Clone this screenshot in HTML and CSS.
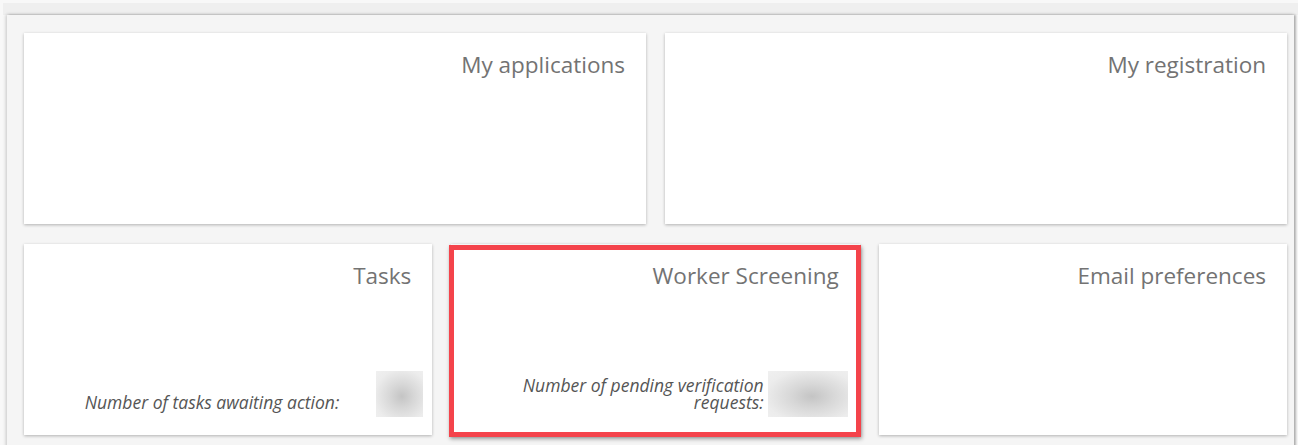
FILE: index.html
```html
<!DOCTYPE html>
<html lang="en">
<head>
<meta charset="utf-8">
<title>Dashboard</title>
<link rel="stylesheet" href="styles.css">
</head>
<body>
  <div class="topbar"></div>
  <main class="panel">
    <section class="row row-two">
      <article class="tile">
        <h2 class="tile-title">My applications</h2>
      </article>
      <article class="tile">
        <h2 class="tile-title">My registration</h2>
      </article>
    </section>
    <section class="row row-three">
      <article class="tile">
        <h2 class="tile-title">Tasks</h2>
        <div class="tile-footer">
          <span class="stat-label">Number of tasks awaiting action:</span>
          <span class="stat-value"><span class="redacted redacted-narrow"></span></span>
        </div>
      </article>
      <article class="tile tile-highlight">
        <h2 class="tile-title">Worker Screening</h2>
        <div class="tile-footer">
          <span class="stat-label">Number of pending verification<br>requests:</span>
          <span class="stat-value"><span class="redacted redacted-wide"></span></span>
        </div>
      </article>
      <article class="tile">
        <h2 class="tile-title">Email preferences</h2>
      </article>
    </section>
  </main>
</body>
</html>
```

FILE: styles.css
```css
* {
  box-sizing: border-box;
}

html, body {
  margin: 0;
  height: 100%;
}

body {
  background: #f8f8f8;
  font-family: "Open Sans", "Noto Sans", sans-serif;
  overflow: hidden;
}

.topbar {
  height: 12px;
  margin: 3px 0 0 3px;
  background: #efefef;
}

.panel {
  margin: 0 4px 0 7px;
  background: #f5f5f5;
  box-shadow: 0 -1px 3px rgba(0, 0, 0, 0.12), -2px 0 3px rgba(0, 0, 0, 0.1), 2px 0 2px rgba(0, 0, 0, 0.25);
  padding: 18px 7px 20px 17px;
  min-height: 440px;
}

.row {
  display: grid;
  gap: 19px;
}

.row + .row {
  margin-top: 20px;
}

.row-two {
  grid-template-columns: 1fr 1fr;
}

.row-three {
  grid-template-columns: 1fr 1fr 1fr;
}

.tile {
  position: relative;
  height: 191px;
  background: #fff;
  box-shadow: 0 1px 3px rgba(0, 0, 0, 0.28);
  display: flex;
  flex-direction: column;
  padding: 17px 21px 18px 20px;
}

.tile-title {
  margin: 0;
  font-size: 22.5px;
  font-weight: 400;
  line-height: 30px;
  color: #737373;
  text-align: right;
}

.tile-footer {
  margin-top: auto;
  margin-right: -12px;
  display: flex;
  justify-content: flex-end;
  align-items: flex-end;
}

.tile-highlight .tile-footer {
  margin-right: -9px;
}

.stat-label {
  font-style: italic;
  font-size: 17.5px;
  line-height: 17px;
  color: #555;
  text-align: right;
  padding-bottom: 6px;
  white-space: nowrap;
}

.stat-value {
  width: 84px;
  height: 46px;
  display: flex;
  justify-content: flex-end;
}

.redacted {
  height: 46px;
  background: radial-gradient(ellipse at 55% 55%, #c4c4c4 0%, #d8d8d8 35%, #ececec 75%, #f0f0f0 100%);
}

.redacted-narrow {
  width: 47px;
}

.redacted-wide {
  width: 80px;
}

/* Highlight frame drawn around the screening tile */
.tile-highlight::after {
  content: "";
  position: absolute;
  top: 1px;
  left: -2px;
  right: -1px;
  bottom: -2px;
  border: 5px solid #f4434b;
  box-shadow: 1px 2px 4px rgba(0, 0, 0, 0.35);
  pointer-events: none;
}
```
